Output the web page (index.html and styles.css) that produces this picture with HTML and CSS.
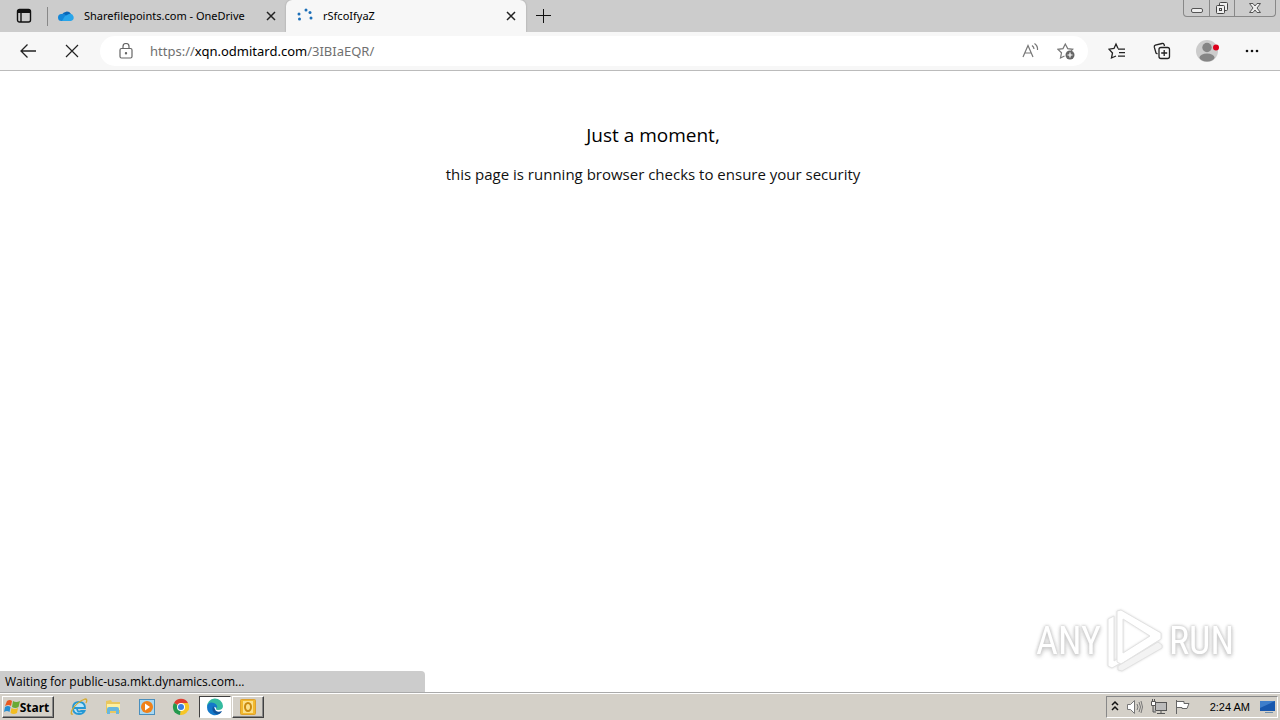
FILE: index.html
```html
<!DOCTYPE html>
<html lang="en">
<head>
<meta charset="utf-8">
<title>rSfcoIfyaZ</title>
<link rel="stylesheet" href="styles.css">
</head>
<body>
<div class="desktop">
  <header class="titlebar">
    <button class="tab-actions" aria-label="Tab actions"><svg width="16" height="16" viewBox="0 0 16 16" fill="none" stroke="#111" stroke-width="1.4"><rect x="1.5" y="1.5" width="13" height="12.5" rx="2"/><path d="M2 3.500h12" stroke-width="3"/><path d="M5 5v9"/></svg></button>
    <div class="tab">
      <svg class="favicon" width="18" height="16" viewBox="0 0 16 16"><path d="M4 7a5 5 0 0 1 9-1l-3 4z" fill="#0867b8"/><path d="M3.500 6a4 4 0 0 1 4 1l4 6H3.500a3.500 3.500 0 0 1 0-7z" fill="#1487d8"/><path d="M7 8l4-2a3.600 3.600 0 0 1 2 7H4z" fill="#28a5ea"/></svg>
      <span class="tab-title">Sharefilepoints.com - OneDrive</span>
      <button class="close" aria-label="Close tab"><svg width="10" height="10" viewBox="0 0 10 10"><path d="M1 1l8 8M9 1L1 9" stroke="#222" stroke-width="1.500"/></svg></button>
    </div>
    <div class="tab active">
      <svg class="favicon" width="18" height="16" viewBox="-1 0 18 16" fill="#1c6fb8"><circle cx="2" cy="6" r="1.500"/><circle cx="2.500" cy="11" r="1.500"/><circle cx="9" cy="2" r="1.500"/><circle cx="13" cy="4.500" r="1.500"/><circle cx="14" cy="10" r="1.500"/></svg>
      <span class="tab-title">rSfcoIfyaZ</span>
      <button class="close" aria-label="Close tab"><svg width="10" height="10" viewBox="0 0 10 10"><path d="M1 1l8 8M9 1L1 9" stroke="#222" stroke-width="1.500"/></svg></button>
    </div>
    <button class="new-tab" aria-label="New tab"><svg width="16" height="16" viewBox="0 0 16 16"><path d="M8.500 1v14M1 7.500h15" stroke="#111"/></svg></button>
    <div class="window-controls">
      <button aria-label="Minimize"><svg width="14" height="14" viewBox="0 0 14 14"><rect x="1.500" y="7.500" width="11" height="4" rx="1.500" fill="#eee" stroke="#555"/></svg></button>
      <button aria-label="Restore"><svg width="14" height="14" viewBox="0 0 14 14" fill="#eee" stroke="#444"><rect x="4.500" y="1.500" width="8" height="8" rx="1"/><rect x="1.500" y="4.500" width="8" height="8" rx="1"/><rect x="4.500" y="7.500" width="2" height="2"/></svg></button>
      <button class="wide" aria-label="Close"><svg width="14" height="14" viewBox="0 0 14 14"><path d="M1.500 2.500h3.500l2 2.500 2-2.500h3.500L9 7l3.500 4.500H9L7 9l-2 2.500H1.500L5 7z" fill="#eee" stroke="#555"/></svg></button>
    </div>
  </header>
  <nav class="toolbar">
    <button class="nav" aria-label="Back"><svg width="18" height="16" viewBox="0 0 18 16" fill="none" stroke="#222" stroke-width="1.300"><path d="M17 8H2M8.500 1.500L2 8l6.500 6.500"/></svg></button>
    <button class="nav" aria-label="Stop loading"><svg width="14" height="14" viewBox="0 0 14 14"><path d="M1 1l12 12M13 1L1 13" stroke="#222" stroke-width="1.200"/></svg></button>
    <div class="address">
      <svg width="14" height="16" viewBox="0 0 14 16" fill="none" stroke="#666" stroke-width="1.200"><rect x="1" y="5.500" width="12" height="9.500" rx="1.500"/><path d="M4 5.500V3.500a3 3 0 0 1 6 0v2"/><circle cx="7" cy="10.200" r=".6" fill="#666"/></svg>
      <span class="url">https://<b>xqn.odmitard.com</b>/3IBIaEQR/</span>
      <button aria-label="Read aloud"><svg width="18" height="16" viewBox="0 0 18 16" fill="none" stroke="#777" stroke-width="1.200"><path d="M1 14L6 2.500 11 14M2.800 10h6.500M10 2.500q2 1.500 2 3.500M12.500 .5q3.500 2.500 3 6.500"/></svg></button>
      <button aria-label="Add to favorites"><svg width="18" height="18" viewBox="0 0 18 18" fill="none" stroke="#777" stroke-width="1.200"><path d="M7.500 14l-4 2 1-5.200L1 7.300l5-.7L8.300 2l2.400 4.600 5 .7-1.500 1.500"/><circle cx="13" cy="13" r="4.500" fill="#666" stroke="none"/><path d="M13 10.500v5M10.500 13h5" stroke="#fff"/></svg></button>
    </div>
    <button class="tool" aria-label="Favorites"><svg width="18" height="18" viewBox="0 0 18 18" fill="none" stroke="#222" stroke-width="1.300"><path d="M10 6.500L8 2 6 6.500l-5 .7L4.500 11l-1 5L8 14M10 7.200h7M11 10.700h6M10 14.200h7"/></svg></button>
    <button class="tool" aria-label="Collections"><svg width="18" height="18" viewBox="0 0 18 18" fill="none" stroke="#222" stroke-width="1.300"><path d="M4.500 12L3 11 1.300 5.200q-.3-1.500 1-2l6.800-1.700q1.400-.3 2 1l.4 1.500"/><rect x="6" y="5.500" width="10.500" height="11" rx="2"/><path d="M11.200 8v6M8.200 11h6"/></svg></button>
    <button class="tool" aria-label="Profile"><svg width="24" height="24" viewBox="0 0 24 24"><circle cx="12" cy="12" r="11" fill="#ccc"/><circle cx="12" cy="8.500" r="4.700" fill="#858585"/><ellipse cx="12" cy="18.500" rx="7.500" ry="4" fill="#858585"/><circle cx="21" cy="8.500" r="3" fill="#dc001b"/></svg></button>
    <button class="tool" aria-label="Settings and more"><svg width="16" height="16" viewBox="0 0 16 16" fill="#111"><circle cx="3" cy="8" r="1.300"/><circle cx="8" cy="8" r="1.300"/><circle cx="13" cy="8" r="1.300"/></svg></button>
  </nav>
  <main class="page">
    <h1>Just a moment,</h1>
    <p>this page is running browser checks to ensure your security</p>
    <div class="watermark"><span>ANY</span><svg width="58" height="64" viewBox="0 0 58 64" fill="#fff" stroke="#e2e2e2"><path d="M2 10l6-3v45l22-13 4 4L6 59l-4-2z"/><path fill-rule="evenodd" d="M11 2l4-1 40 23v6L15 55l-4-2zM17 10v34l27-17z"/><path d="M12 57l40-24 4 3v3L16 62l-4-1z" fill="#f3f3f3"/></svg><span>RUN</span></div>
    <div class="status">Waiting for public-usa.mkt.dynamics.com...</div>
  </main>
  <footer class="taskbar">
    <button class="start"><svg width="16" height="16" viewBox="0 0 16 16"><path d="M3 2q3-2 5 0L7 7Q5 5 1 7z" fill="#e85920"/><path d="M9 2q3 2 7 0l-1.500 6q-3 2-6.500 0z" fill="#69aa35"/><path d="M1 8q3-2 5.500 0L5.500 13q-2.500-2-5.500 0z" fill="#268ed2"/><path d="M7.500 9q3 2 6.500 0l-1 5q-3.500 2-6.500 0z" fill="#f2bd22"/></svg>Start</button>
    <button class="task" aria-label="Internet Explorer"><svg width="18" height="18" viewBox="0 0 18 18" fill="none"><path d="M4 10h11q0-6-6-6t-6 6 6 6q4 0 5.500-3H11q-4 2-4-3" fill="#bce6fa" stroke="#2498d5" stroke-width="1.800"/><path d="M3 16Q0 17 2 12 7 4 15 1q3 0 1 4" stroke="#d5ab31" stroke-width="1.300"/></svg></button>
    <button class="task" aria-label="Windows Explorer"><svg width="18" height="18" viewBox="0 0 18 18"><path d="M2 3l5-1 1 2h8v11H2z" fill="#e9c75f"/><path d="M3 6h13v6H3z" fill="#fff0a0"/><path d="M3 16v-5q0-2 2-2h8q2 0 2 2v5h-3v-3H6v3z" fill="#68b7de"/></svg></button>
    <button class="task" aria-label="Media Player"><svg width="18" height="18" viewBox="0 0 18 18"><rect x="1.500" y="1.500" width="15" height="15" fill="#a8d8f2" stroke="#4a8fbd"/><circle cx="9" cy="9" r="6" fill="#f08118"/><path d="M7 5.500v7l5-3.500z" fill="#fff"/></svg></button>
    <button class="task" aria-label="Chrome"><svg width="18" height="18" viewBox="0 0 18 18"><path d="M9 9L2 5a8 8 0 0 1 14 0z" fill="#df3e30"/><path d="M9 9h8a8 8 0 0 1-9 8z" fill="#f7c626"/><path d="M9 9l-1 8A8 8 0 0 1 2 5z" fill="#24994d"/><path d="M9 5h7a8 8 0 0 1 0 8l-7-4z" fill="#f7c626"/><circle cx="9" cy="9" r="4" fill="#fff"/><circle cx="9" cy="9" r="3" fill="#397fe3"/></svg></button>
    <button class="task pressed" aria-label="Edge"><svg width="18" height="18" viewBox="0 0 18 18"><path d="M1 9a8 8 0 0 1 16-1q0 4-5 4-2 0-2-1 1-4-4-4-4 0-5 2z" fill="#35bba0"/><path d="M1 9q1-6 7-4 4 2 3 5Q7 8 7 12q1 4 8 2-3 4-8 3-6-2-6-8z" fill="#1478c9"/><path d="M7 8q-2 6 3 8 4 1 6-3-6 2-7-2z" fill="#10549c"/></svg></button>
    <button class="task raised" aria-label="Outlook"><svg width="18" height="18" viewBox="0 0 18 18"><rect x="1.500" y="1.500" width="15" height="15" rx="1" fill="#f2b92e" stroke="#dda02c"/><rect x="4" y="3" width="10" height="12" fill="#fbe08c"/><ellipse cx="9" cy="9" rx="3" ry="4" fill="none" stroke="#c98a10" stroke-width="2"/></svg></button>
    <div class="tray">
      <svg width="10" height="14" viewBox="0 0 10 14" fill="none" stroke="#111" stroke-width="1.500"><path d="M2 5l3-3 3 3M2 10l3-3 3 3"/></svg>
      <svg width="18" height="16" viewBox="0 0 18 16" fill="#fff" stroke="#777"><path d="M1.500 5.500h3l4-4v13l-4-4h-3z"/><path d="M11 5q2 3 0 6M13 3q3 5 0 10M15 2q3 6 0 12" fill="none"/></svg>
      <svg width="18" height="16" viewBox="0 0 18 16" fill="#bbb" stroke="#555"><rect x="5.500" y="3.500" width="11" height="8"/><path d="M7 14.500h8M11 12v2M3 6v7h3"/><path d="M1.500 2.500h4v4h-4zM2.500 0v2M4.500 0v2" fill="#fff"/></svg>
      <svg width="18" height="16" viewBox="0 0 18 16"><path d="M2.500 1v14M3 2.500h7v2h5l-2 5H8v-1H3" fill="#fff" stroke="#666"/></svg>
      <time>2:24 AM</time>
      <svg width="18" height="16" viewBox="0 0 18 16"><path d="M1 2h15v10H1z" fill="#1858ae"/><path d="M1 2h15L1 9z" fill="#3e7ecb"/><path d="M6 13h8v1H6z" fill="#6f8eaa"/></svg>
    </div>
  </footer>
</div>
</body>
</html>
```
FILE: styles.css
```css
* { box-sizing: border-box; }
body { margin: 0; font-family: "Open Sans", "Noto Sans", sans-serif; color: #000; }
button { margin: 0; padding: 0; border: 0; background: none; font: inherit; color: inherit; display: flex; align-items: center; justify-content: center; flex: none; }
svg { display: block; flex: none; }
.desktop { min-height: 100vh; display: flex; flex-direction: column; background: #fff; }
.titlebar { height: 32px; display: flex; align-items: stretch; background: #ccc; font-family: "Noto Sans", sans-serif; font-size: 11px; }
.tab-actions { width: 47px; }
.tab { display: flex; align-items: center; width: 239px; padding: 0 10px; gap: 9px; position: relative; }
.tab:not(.active)::before { content: ""; position: absolute; left: 0; top: 7px; height: 19px; border-left: 1px solid #888; }
.tab.active { width: 240px; background: #f7f7f7; border-radius: 6px 6px 0 0; box-shadow: 0 0 2px #999; clip-path: inset(0 -3px 0 -3px); }
.tab-title { flex: 1; white-space: nowrap; line-height: 16px; }
.new-tab { width: 34px; }
.window-controls { display: flex; align-self: flex-start; height: 17px; margin-left: auto; margin-right: 4px; border: 1px solid #888; border-top: 0; border-radius: 0 0 4px 4px; }
.window-controls button { width: 25px; }
.window-controls button + button { border-left: 1px solid #888; }
.window-controls .wide { width: 41px; }
.toolbar { height: 39px; display: flex; align-items: center; background: #f7f7f7; border-bottom: 1px solid #bbb; padding: 0 6px; }
.nav { width: 44px; height: 32px; }
.address { flex: 1; height: 30px; margin: 0 6px; padding: 0 13px 0 19px; border-radius: 15px; background: #fff; display: flex; align-items: center; gap: 17px; }
.url { flex: 1; font-family: "Noto Sans", sans-serif; font-size: 13px; color: #707070; }
.url b { font-weight: 400; color: #000; }
.tool { width: 45px; height: 32px; }
.page { flex: 1; display: flex; flex-direction: column; align-items: center; padding-top: 50px; padding-left: 26px; position: relative; }
h1 { margin: 0; font-size: 19px; line-height: 28px; font-weight: 400; }
p { margin: 13px 0 0; font-size: 15px; line-height: 24px; color: #111; }
.status { position: absolute; left: 0; bottom: 0; width: 425px; height: 21px; padding-left: 5px; border-radius: 0 4px 0 0; background: #ccc; font-size: 12px; line-height: 21px; }
.watermark { position: absolute; right: 46px; bottom: 18px; display: flex; align-items: center; gap: 5px; font-family: "Roboto Condensed", "Liberation Sans Narrow", "Liberation Sans", sans-serif; font-size: 38px; line-height: 66px; color: #fff; text-shadow: 0 0 3px #ccc, 0 2px 4px #ccc; filter: drop-shadow(0 0 1px #ddd); }
.taskbar { height: 28px; display: flex; align-items: center; padding: 1px 2px 0; background: #d4d0c8; border-top: 1px solid #aaa; box-shadow: inset 0 1px #fff; }
.start { width: 52px; height: 22px; padding-right: 3px; border: 1px solid; border-color: #fff #404040 #404040 #fff; box-shadow: inset -1px -1px #888; font: bold 12px "Noto Sans", sans-serif; margin-right: 8px; }
.task { width: 34px; height: 22px; }
.pressed { width: 32px; margin: 0 1px; background: #fff; border: 1px solid; border-color: #404040 #fff #fff #404040; }
.raised { width: 32px; border: 1px solid; border-color: #fff #404040 #404040 #fff; box-shadow: inset -1px -1px #888; }
.tray { height: 22px; margin-left: auto; display: flex; align-items: center; gap: 6px; padding: 0 0 0 3px; border: 1px solid; border-color: #888 #fff #fff #888; font: 11px "Liberation Sans", sans-serif; }
time { padding: 0 3px 0 12px; }
```
